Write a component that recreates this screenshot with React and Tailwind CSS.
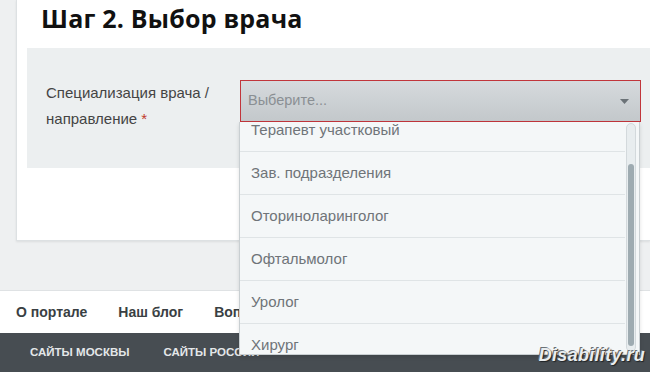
import React from "react";

const items = [
  "Терапевт участковый",
  "Зав. подразделения",
  "Оториноларинголог",
  "Офтальмолог",
  "Уролог",
  "Хирург",
];

export default function App() {
  return (
    <div
      className="relative h-[372px] w-[650px] overflow-hidden bg-[#eef0f1]"
      style={{ fontFamily: '"Liberation Sans", Arial, sans-serif' }}
    >
      {/* step card */}
      <div className="ml-[16px] h-[241px] border-l border-b border-[#dde1e3] bg-white pl-[10px] shadow-[0_1px_2px_rgba(0,0,0,0.08)]">
        <h2 className="h-[48px] pl-[14px] pt-[1px] text-[25px] font-bold leading-[34px] tracking-[0.2px] text-[#111]" style={{ fontFamily: '"Open Sans", sans-serif' }}>
          Шаг 2. Выбор врача
        </h2>
        <div className="flex h-[120px] bg-[#eceff0] pl-[19px] pt-[32px]">
          <div className="w-[194px] text-[15px] leading-[26px] text-[#444]">
            Специализация врача /<br />
            направление <span className="text-[#c0392b]">*</span>
          </div>
          <div className="flex h-[42px] w-[401px] items-center justify-between border border-[#c1353b] bg-gradient-to-b from-[#d6dadd] to-[#c3c8cb] pl-[7px] pr-[11px]">
            <span className="text-[14.5px] text-[#8a8f93]">Выберите...</span>
            <svg width="9" height="5" viewBox="0 0 9 5">
              <path d="M0 0h9L4.5 5z" fill="#6b7277" />
            </svg>
          </div>
        </div>
      </div>

      {/* footer nav */}
      <div className="mt-[49px] flex h-[43px] items-center gap-[31px] border-t border-[#dfe2e4] bg-white pl-[16px] text-[14px] font-bold text-[#3a3f43]">
        <span>О портале</span>
        <span>Наш блог</span>
        <span>Вопросы</span>
      </div>
      <div className="flex h-[39px] items-center gap-[34px] bg-[#474d52] pl-[30px] text-[11.5px] font-bold uppercase text-[#e4e7e9]">
        <span>Сайты Москвы</span>
        <span>Сайты России</span>
      </div>

      {/* open dropdown */}
      <div className="absolute left-[239px] top-[122px] h-[233px] w-[401px] overflow-hidden border border-t-0 border-[#c9cfd2] bg-[#f4f7f8] shadow-[0_2px_4px_rgba(0,0,0,0.12)]">
        <div className="-mt-[13px] pr-[14px]">
          {items.map((t) => (
            <div
              key={t}
              className="flex h-[43px] items-center border-b border-[#dfe4e6] pl-[11px] text-[15px] text-[#6f7478]"
            >
              {t}
            </div>
          ))}
        </div>
        <div className="absolute right-[3px] top-[1px] h-[229px] w-[10px] rounded-full border border-[#d3d9dc] bg-[#e8edef]">
          <div className="ml-[1px] mt-[40px] h-[182px] w-[6px] rounded-full bg-[#9eabb1]" />
        </div>
      </div>

      {/* watermark */}
      <div
        className="absolute bottom-[3px] right-[5px] text-[18px] font-bold italic tracking-[0.3px] text-[#e9edef]"
        style={{ textShadow: "1px 1px 1px #1f2326, -1px -1px 0 #6a7176" }}
      >
        Disability.ru
      </div>
    </div>
  );
}
